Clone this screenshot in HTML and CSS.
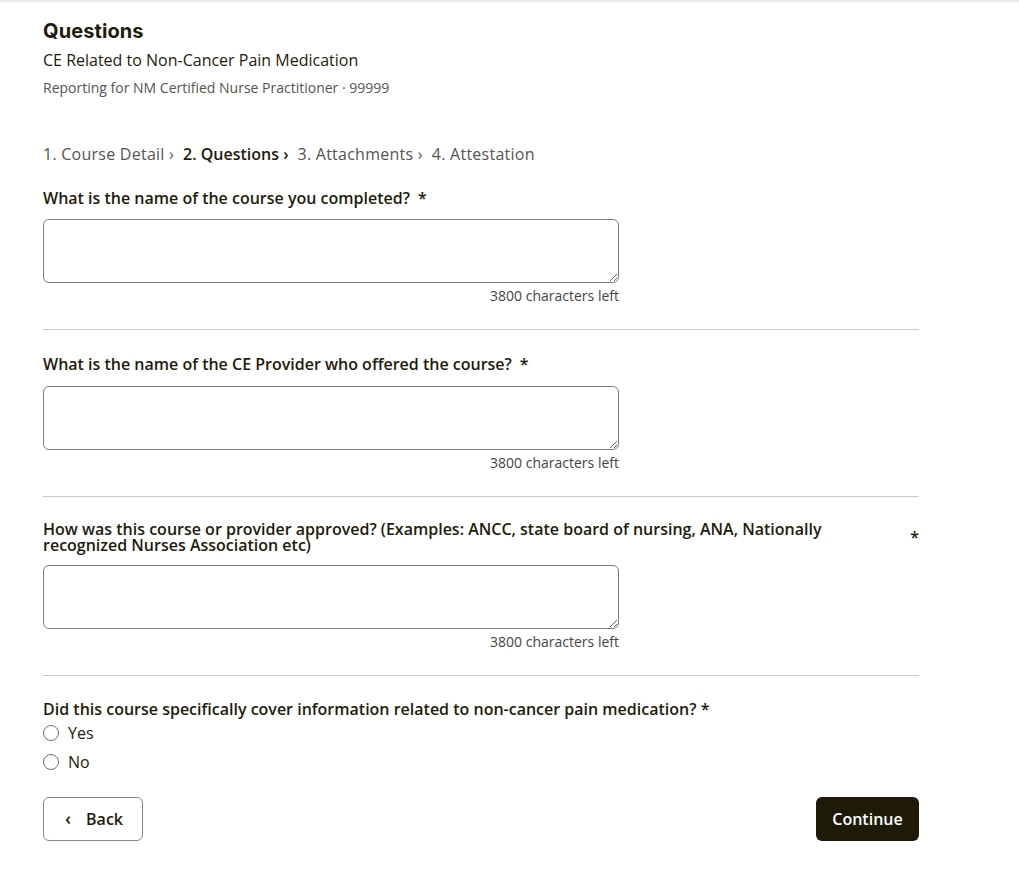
FILE: index.html
```html
<!DOCTYPE html>
<html lang="en">
<head>
<meta charset="utf-8">
<title>Questions</title>
<link rel="stylesheet" href="styles.css">
</head>
<body>
<div class="topbar"></div>
<main class="page">
  <header class="head">
    <h1 class="title">Questions</h1>
    <p class="subtitle">CE Related to Non-Cancer Pain Medication</p>
    <p class="meta">Reporting for NM Certified Nurse Practitioner · 99999</p>
  </header>

  <nav class="steps">
    <span class="step">1. Course Detail ›</span>
    <span class="step active">2. Questions ›</span>
    <span class="step">3. Attachments ›</span>
    <span class="step">4. Attestation</span>
  </nav>

  <section class="q first">
    <label class="q-label"><span class="q-text">What is the name of the course you completed?</span><span class="req">*</span></label>
    <textarea class="field"></textarea>
    <div class="count">3800 characters left</div>
  </section>

  <section class="q">
    <label class="q-label"><span class="q-text">What is the name of the CE Provider who offered the course?</span><span class="req">*</span></label>
    <textarea class="field"></textarea>
    <div class="count">3800 characters left</div>
  </section>

  <section class="q long">
    <label class="q-label"><span class="q-text">How was this course or provider approved? (Examples: ANCC, state board of nursing, ANA, Nationally recognized Nurses Association etc)</span><span class="req">*</span></label>
    <textarea class="field"></textarea>
    <div class="count">3800 characters left</div>
  </section>

  <div class="radio-q" role="radiogroup">
    <div class="r-label">Did this course specifically cover information related to non-cancer pain medication? *</div>
    <label class="opt"><span class="dot"></span>Yes</label>
    <label class="opt"><span class="dot"></span>No</label>
  </div>

  <div class="actions">
    <button class="btn back"><span class="chev">‹</span>Back</button>
    <button class="btn primary">Continue</button>
  </div>
</main>
</body>
</html>
```

FILE: styles.css
```css
* { box-sizing: border-box; }
html, body { margin: 0; padding: 0; background: #fff; }
body {
  font-family: "Open Sans", "Liberation Sans", sans-serif;
  color: #1f1b0a;
}
.topbar {
  height: 3px;
  background: linear-gradient(#e4e4e4, #f6f6f6);
}
.page {
  width: 876px;
  margin-left: 43px;
  padding-bottom: 30px;
}
.head { padding-top: 14px; }
.title {
  margin: 0;
  font-family: Inter, "Open Sans", sans-serif;
  font-weight: 700;
  font-size: 20px;
  line-height: 28px;
  letter-spacing: 0.1px;
  color: #1f1b0a;
}
.subtitle {
  margin: 3px 0 0;
  font-size: 16px;
  line-height: 24px;
}
.meta {
  margin: 6px 0 0;
  font-size: 14px;
  line-height: 20px;
  color: #55554f;
}
.steps {
  margin-top: 44px;
  display: flex;
  gap: 9px;
  font-size: 16px;
  font-weight: 500;
  letter-spacing: 0.25px;
  line-height: 24px;
  color: #55544f;
}
.step.active { color: #1f1b0a; font-weight: 600; letter-spacing: 0; }

.q {
  padding: 23px 0 24px;
  border-bottom: 1px solid #c9c9c6;
  display: flex;
  flex-direction: column;
}
.q.first { padding-top: 21px; }
.q.long { padding-top: 24px; }
.q-label {
  display: flex;
  align-items: center;
  gap: 8px;
  font-size: 16px;
  font-weight: 600;
  line-height: 22px;
}
.q-text { line-height: 16px; }
.req { line-height: 22px; }
.field {
  margin-top: 11px;
  width: 576px;
  height: 64px;
  border: 1px solid #7e7c6e;
  border-radius: 6px;
  font-family: inherit;
  font-size: 16px;
  padding: 8px 10px;
  resize: vertical;
}
.q.first .field { margin-top: 10px; }
.q.long .field { margin-top: 12px; }
.count {
  width: 576px;
  margin-top: 4px;
  text-align: right;
  font-size: 14px;
  line-height: 18px;
  color: #45453f;
}

.radio-q {
  padding-top: 23px;
}
.r-label {
  font-size: 16px;
  font-weight: 600;
  line-height: 20px;
  margin-bottom: -1px;
}
.opt {
  display: flex;
  align-items: center;
  gap: 9px;
  font-size: 16px;
  line-height: 24px;
  height: 29px;
  color: #1f1b0a;
}
.dot {
  width: 16px;
  height: 16px;
  border: 1px solid #6f6f6a;
  border-radius: 50%;
  background: #fff;
}
.actions {
  margin-top: 21px;
  display: flex;
  justify-content: space-between;
}
.btn {
  height: 44px;
  border-radius: 6px;
  font-family: inherit;
  font-size: 16px;
  font-weight: 600;
  cursor: pointer;
}
.back {
  width: 100px;
  background: #fff;
  border: 1px solid #8a877a;
  color: #1f1b0a;
  display: flex;
  align-items: center;
  justify-content: center;
  gap: 15px;
  padding-left: 8px;
}
.chev { font-size: 18px; line-height: 18px; margin-top: -2px; }
.primary {
  width: 103px;
  border: 0;
  background: #1f1a08;
  color: #fff;
}
```
